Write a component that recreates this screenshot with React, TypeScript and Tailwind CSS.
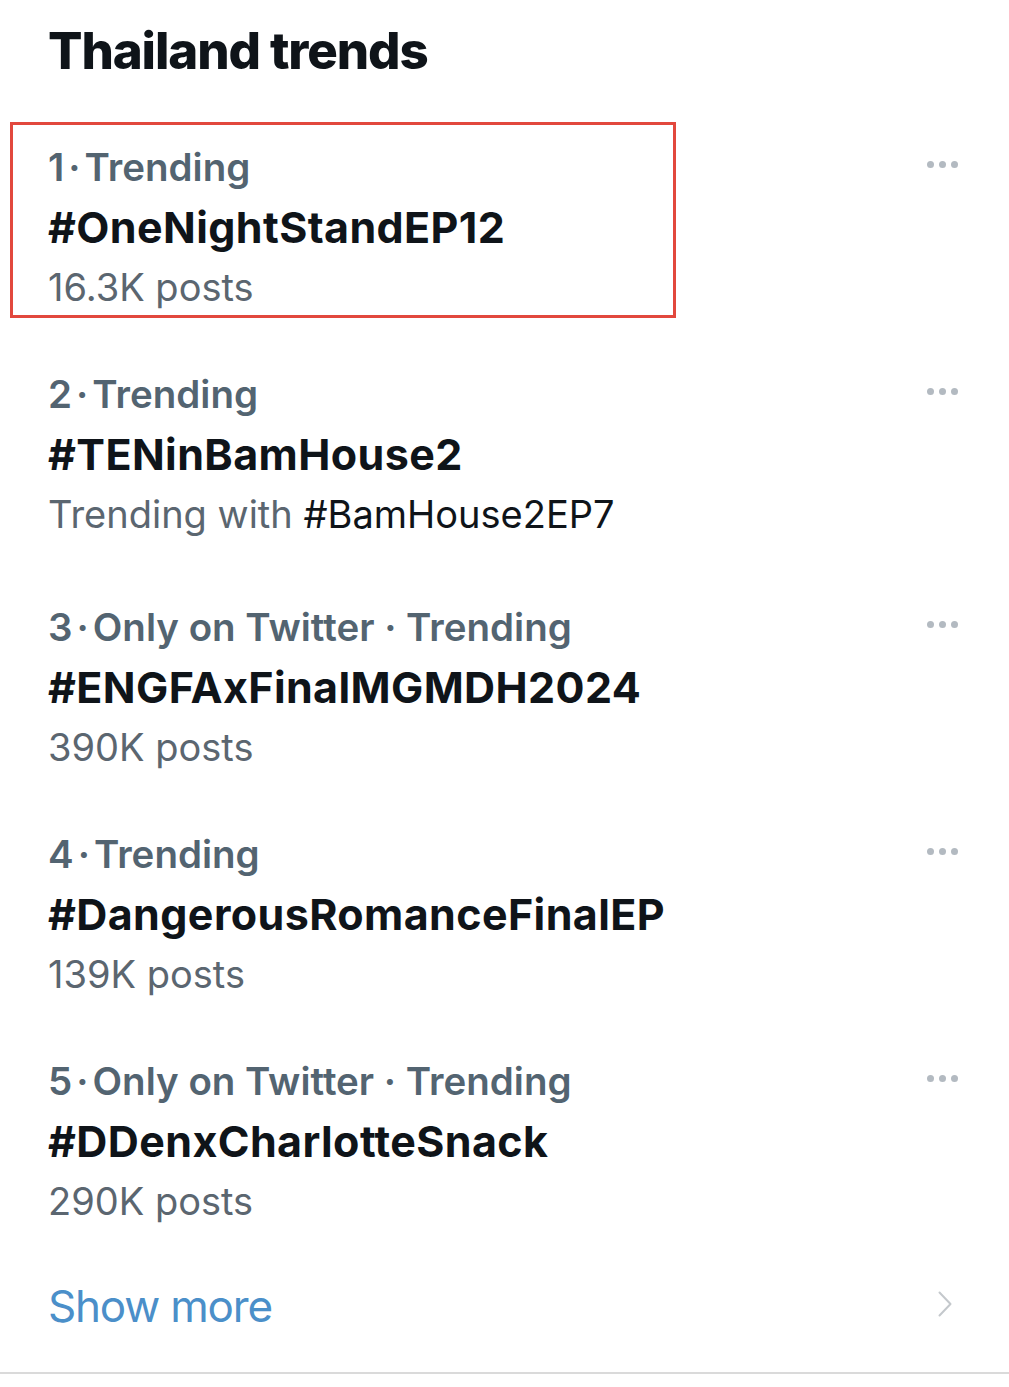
type Trend = {
  rank: number;
  context: string;
  tag: string;
  meta: React.ReactNode;
};

const trends: Trend[] = [
  { rank: 1, context: "Trending", tag: "#OneNightStandEP12", meta: "16.3K posts" },
  {
    rank: 2,
    context: "Trending",
    tag: "#TENinBamHouse2",
    meta: (
      <>
        Trending with <span className="text-[#0f1419]">#BamHouse2EP7</span>
      </>
    ),
  },
  { rank: 3, context: "Only on Twitter · Trending", tag: "#ENGFAxFinalMGMDH2024", meta: "390K posts" },
  { rank: 4, context: "Trending", tag: "#DangerousRomanceFinalEP", meta: "139K posts" },
  { rank: 5, context: "Only on Twitter · Trending", tag: "#DDenxCharlotteSnack", meta: "290K posts" },
];

function MoreDots() {
  return (
    <div className="flex items-center gap-[5px] pt-[24px]">
      <span className="h-[7px] w-[7px] rounded-full bg-[#b3bac1]" />
      <span className="h-[7px] w-[7px] rounded-full bg-[#b3bac1]" />
      <span className="h-[7px] w-[7px] rounded-full bg-[#b3bac1]" />
    </div>
  );
}

function TrendRow({ trend, highlighted }: { trend: Trend; highlighted?: boolean }) {
  return (
    <div className={`flex items-start justify-between pr-[51px] ${trend.rank === 2 ? "pb-[6px]" : ""}`}>
      <div className="relative">
        {highlighted && (
          <div className="pointer-events-none absolute left-[-38px] top-[-15px] h-[196px] w-[666px] border-[3px] border-[#e2483d]" />
        )}
        <div className="text-[38.5px] leading-[60px] font-semibold text-[#536471]">
          {trend.rank}
          <span className="px-[4px]">·</span>
          {trend.context}
        </div>
        <div className="text-[43px] leading-[60px] font-bold tracking-[0.4px] text-[#0f1419]">{trend.tag}</div>
        <div className="text-[38px] leading-[60px] font-normal text-[#5b6670]">{trend.meta}</div>
      </div>
      <MoreDots />
    </div>
  );
}

export default function App() {
  return (
    <div className="min-h-[1387px] w-[1009px] bg-white font-['Inter',sans-serif]">
      <div className="pl-[48px] pt-[11px]">
        <h2 className="text-[51px] leading-[80px] font-extrabold tracking-[-1.1px] text-[#0f1419]">Thailand trends</h2>
        <div className="mt-[46px] flex flex-col gap-[47px]">
          {trends.map((t) => (
            <TrendRow key={t.rank} trend={t} highlighted={t.rank === 1} />
          ))}
        </div>
        <div className="mt-[35px] flex items-center justify-between pr-[57px]">
          <span className="text-[44px] leading-[80px] font-normal tracking-[-1.2px] text-[#4b8fc9]">Show more</span>
          <svg width="14" height="26" viewBox="0 0 14 26" fill="none" className="mt-[-4px]">
            <polyline points="1.5,1.5 12.5,13 1.5,24.5" stroke="#c4c8cc" strokeWidth="2" strokeLinecap="round" strokeLinejoin="round" />
          </svg>
        </div>
      </div>
      <div className="mt-[26px] h-[2px] w-full bg-[#dadada]" />
    </div>
  );
}
